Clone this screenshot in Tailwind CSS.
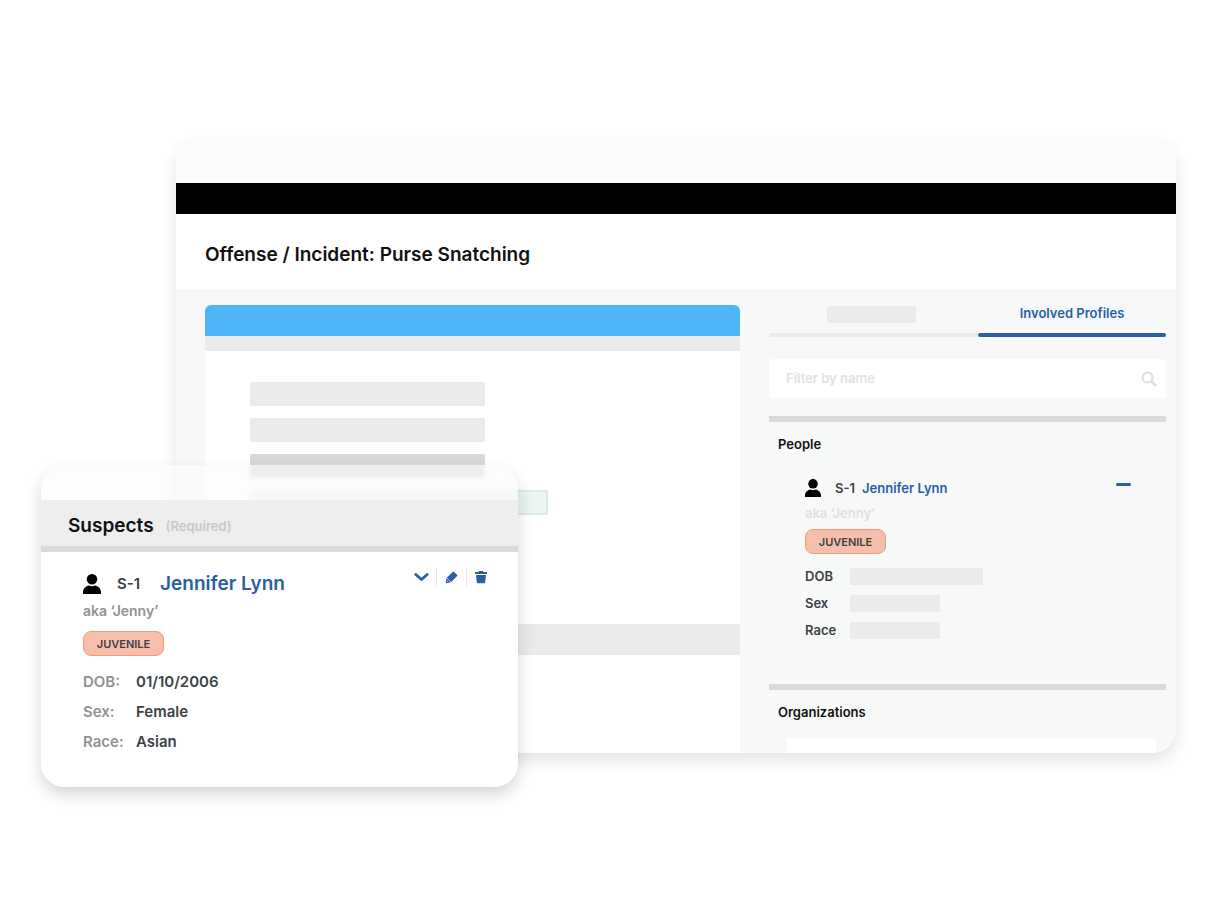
<!DOCTYPE html>
<html lang="en">
  <head>
    <meta charset="UTF-8" />
    <meta name="viewport" content="width=device-width, initial-scale=1.0" />
    <title>Offense / Incident: Purse Snatching</title>
    <script src="https://cdn.jsdelivr.net/npm/@tailwindcss/browser@4"></script>
  </head>
  <body class="bg-white font-['Inter',sans-serif] font-semibold text-[#3d4245]">
    <div class="relative pt-[138px] pb-[172px] pl-44 pr-[34px]">
      <!-- Report window -->
      <main class="overflow-hidden rounded-3xl bg-white shadow-[0_8px_16px_rgba(0,0,0,0.11)]">
        <div class="h-[45px] bg-[#fcfcfc]"></div>
        <div class="h-[31px] bg-black"></div>
        <header class="flex h-[75px] items-center px-[29px] pt-1.5">
          <h1 class="text-[19px] leading-6 text-[#111]">Offense / Incident: Purse Snatching</h1>
        </header>

        <div class="flex gap-[29px] bg-[#f7f8f8] pt-4 pl-[29px] pr-[10px]">
          <section class="flex-1 overflow-hidden rounded-t-md bg-white">
            <div class="h-[31px] bg-[#4eb5f8]"></div>
            <div class="h-[15px] bg-[#eaeaea]"></div>
            <div class="flex flex-col gap-3 px-[45px] pt-[31px]">
              <div class="h-6 w-[235px] rounded-xs bg-[#eaeaea]"></div>
              <div class="h-6 w-[235px] rounded-xs bg-[#eaeaea]"></div>
              <div class="h-6 w-[235px] rounded-xs bg-[#d8d8d8]"></div>
              <div class="h-[25px] w-[298px] rounded-xs border-2 border-[#dcebe7] bg-[#eaf5f2]"></div>
            </div>
            <div class="mt-[109px] h-[31px] rounded-xs bg-[#eaeaea]"></div>
          </section>

          <aside class="w-[397px] text-[13px] leading-5">
            <div class="flex h-8">
              <div class="flex flex-1 justify-center border-b-4 border-[#eaeaea]">
                <div class="mt-px mr-1 h-[17px] w-[89px] rounded-xs bg-[#eaeaea]"></div>
              </div>
              <button type="button" class="relative flex w-[188px] items-start justify-center text-[#2a5fa3]">
                <span class="-mt-0.5">Involved Profiles</span>
                <span class="absolute inset-x-0 bottom-0 h-1 rounded-full bg-[#2a5fa3]"></span>
              </button>
            </div>

            <div class="mt-[22px] flex h-[39px] items-center rounded bg-white pl-[17px] pr-[9px]">
              <input type="text" aria-label="Filter by name" placeholder="Filter by name" class="min-w-0 flex-1 bg-transparent pb-0.5 text-[#3d4245] outline-none placeholder:text-[#e2e2e2]" />
              <svg class="size-4" viewBox="0 0 16 16" fill="none" stroke="#dedede" aria-hidden="true">
                <circle cx="6.500" cy="6.500" r="5" stroke-width="2.200" />
                <path d="M10.500 10.500l3.800 3.800" stroke-width="2.800" stroke-linecap="round" />
              </svg>
            </div>

            <section class="mt-[18px] h-[268px] border-t-[6px] border-[#dadada] pt-3 pl-[9px] pr-[35px]">
              <h2 class="font-semibold text-[#111]">People</h2>
              <div class="mt-6 pl-[27px]">
                <div class="flex items-center">
                  <svg class="h-[18px] w-4" viewBox="0 0 16 18" fill="#000" aria-hidden="true">
                    <circle cx="8" cy="4.800" r="4.800" />
                    <path d="M0 18v-1.500C0 13 2.500 10.900 5.200 10.400c1.600 0.900 4 0.900 5.600 0C13.500 10.900 16 13 16 16.500V18z" />
                  </svg>
                  <span class="ml-3.5">S-1</span>
                  <a href="#" class="ml-[7px] text-[#2a5fa3]">Jennifer Lynn</a>
                  <button type="button" aria-label="Collapse" class="mb-2 ml-auto h-[3px] w-[15px] rounded-full bg-[#2a5fa3]"></button>
                </div>
                <p class="mt-[5px] text-[#dfdfdf]">aka ‘Jenny’</p>
                <span class="mt-1.5 flex h-[25px] w-[81px] items-center justify-center rounded-lg border border-[#f59a78] bg-[#f6bfab] text-[11px] leading-4">JUVENILE</span>
                <dl class="mt-3 grid grid-cols-[45px_1fr] items-center gap-y-[7px]">
                  <dt>DOB</dt>
                  <dd class="h-[17px] w-[133px] rounded-xs bg-[#eaeaea]"></dd>
                  <dt>Sex</dt>
                  <dd class="h-[17px] w-[90px] rounded-xs bg-[#eaeaea]"></dd>
                  <dt>Race</dt>
                  <dd class="h-[17px] w-[90px] rounded-xs bg-[#eaeaea]"></dd>
                </dl>
              </div>
            </section>

            <section class="border-t-[6px] border-[#dadada] pt-3 pl-[9px] pr-[10px]">
              <h2 class="font-semibold text-[#111]">Organizations</h2>
              <div class="mt-4 ml-[9px] h-[15px] bg-white"></div>
            </section>
          </aside>
        </div>
      </main>

      <!-- Suspect card, floats over the report window -->
      <section class="absolute top-[465px] left-[41px] w-[477px] overflow-hidden rounded-3xl shadow-[0_8px_16px_rgba(0,0,0,0.16)]">
        <div class="h-[35px] bg-[#fcfcfc]/60 backdrop-blur-[2px]"></div>
        <header class="flex h-[52px] items-center gap-3 border-b-[6px] border-[#dadada] bg-[#eeeeee] px-[27px] pt-1.5">
          <h2 class="text-[19px] leading-6 text-[#111]">Suspects</h2>
          <span class="text-[13px] leading-5 text-[#c8c8c8]">(Required)</span>
        </header>
        <div class="bg-white pt-3 pl-[42px] pr-[31px] pb-[35px] text-[15px] leading-5">
          <div class="flex h-10 items-center">
            <svg class="h-5 w-[18px]" viewBox="0 0 18 20" fill="#000" aria-hidden="true">
              <circle cx="9" cy="5.300" r="5.300" />
              <path d="M0 20v-1.700C0 14.500 2.800 12.200 5.900 11.600c1.800 1 4.400 1 6.200 0C15.200 12.200 18 14.500 18 18.300V20z" />
            </svg>
            <span class="ml-4">S-1</span>
            <a href="#" class="ml-5 text-[19px] leading-6 text-[#2a5fa3]">Jennifer Lynn</a>
            <div class="mb-3.5 ml-auto flex items-center text-[#2a5fa3]">
              <button type="button" aria-label="Expand" class="pr-[7px]">
                <svg class="h-[18px] w-[15px]" viewBox="0 0 15 16" fill="none" stroke="currentColor" stroke-width="2.800" stroke-linecap="round" stroke-linejoin="round">
                  <path d="M1.800 5.500L7.500 10.500 13.200 5.500" />
                </svg>
              </button>
              <button type="button" aria-label="Edit" class="border-x border-[#e6e6e6] px-2">
                <svg class="h-[18px] w-[13px]" viewBox="0 0 14 16" fill="currentColor">
                  <path d="M8.200 2.600Q9 1.800 9.800 2.600L12.900 5.700Q13.700 6.500 12.900 7.300L6.700 13.500 2 8.800z" />
                  <path fill-rule="evenodd" d="M1.700 9.100L6.300 13.700 1.600 14.600Q0.700 14.700 0.800 13.800zM2.200 11.900v1.300h1.300z" />
                </svg>
              </button>
              <button type="button" aria-label="Delete" class="pl-2">
                <svg class="h-[18px] w-3" viewBox="0 0 12 16" fill="currentColor">
                  <path d="M4 2h4l.5 1H12v2H0V3h3.500z" />
                  <path d="M1 6h10l-.8 7q-.1 1.300-1.300 1.300H3.100q-1.200 0-1.300-1.300z" />
                </svg>
              </button>
            </div>
          </div>
          <p class="-mt-3 pt-[9px] text-[14px] text-[#929292]">aka ‘Jenny’</p>
          <span class="mt-2.5 flex h-[25px] w-[81px] items-center justify-center rounded-lg border border-[#f59a78] bg-[#f6bfab] text-[11px] leading-4">JUVENILE</span>
          <dl class="mt-4 grid grid-cols-[53px_1fr] gap-y-2.5">
            <dt class="text-[#929292]">DOB:</dt>
            <dd>01/10/2006</dd>
            <dt class="text-[#929292]">Sex:</dt>
            <dd>Female</dd>
            <dt class="text-[#929292]">Race:</dt>
            <dd>Asian</dd>
          </dl>
        </div>
      </section>
    </div>
  </body>
</html>
